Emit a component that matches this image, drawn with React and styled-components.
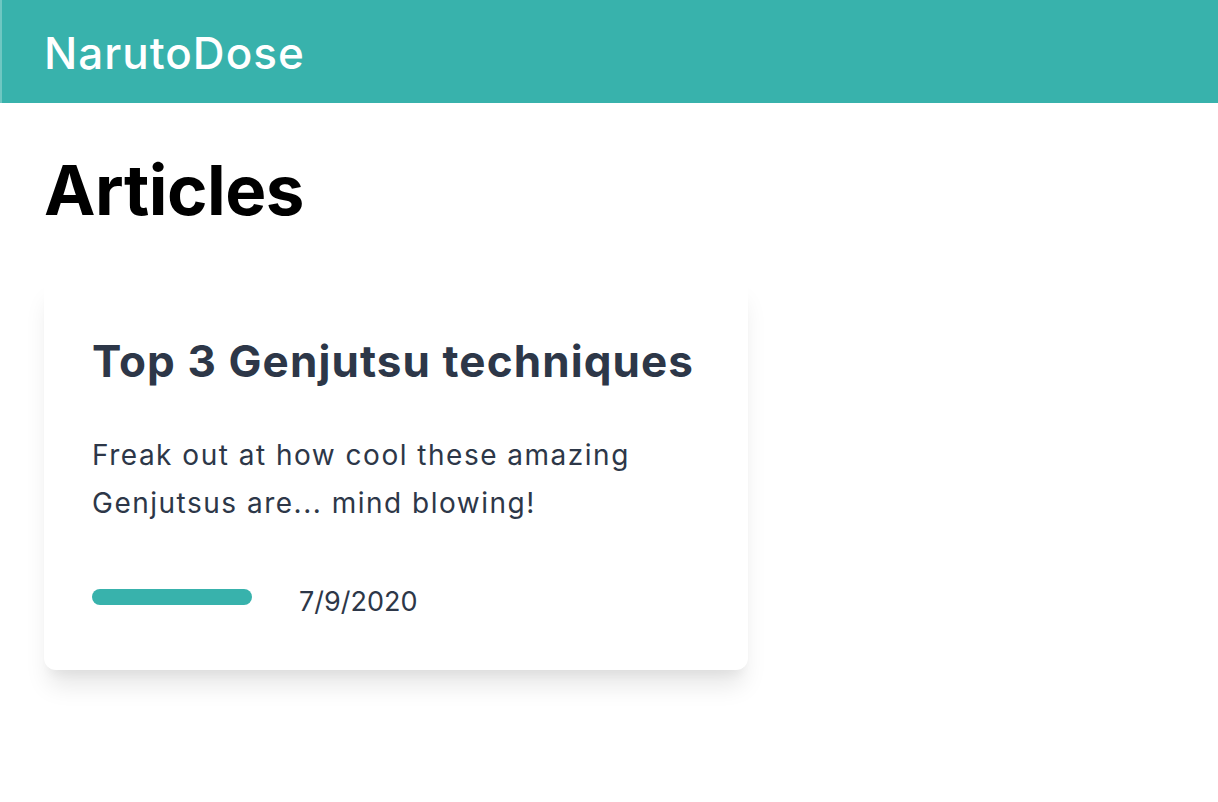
import styled, { createGlobalStyle } from 'styled-components';

const GlobalStyle = createGlobalStyle`
  * { box-sizing: border-box; }
  body {
    margin: 0;
    background: #fff;
    font-family: Inter, "Noto Sans", sans-serif;
  }
`;

const Header = styled.header`
  height: 103px;
  background: #38b2ac;
  border-left: 2px solid #6fc7c2;
  display: flex;
  align-items: center;
  padding: 2px 0 0 42px;
`;

const Brand = styled.h1`
  margin: 0;
  color: #fff;
  font-size: 44px;
  font-weight: 500;
  letter-spacing: 1px;
`;

const Main = styled.main`
  padding: 46px 44px;
`;

const Heading = styled.h2`
  margin: 0 0 45px;
  font-size: 69px;
  font-weight: 700;
  line-height: 1.2;
  color: #000;
  letter-spacing: -0.5px;
`;

const Card = styled.article`
  width: 704px;
  padding: 48px 48px 50px;
  background: #fff;
  border-radius: 12px;
  box-shadow: 0 20px 25px -5px rgba(0, 0, 0, 0.1), 0 10px 10px -5px rgba(0, 0, 0, 0.04);
  color: #2d3748;
`;

const Title = styled.h3`
  margin: 0 0 34px;
  font-size: 44px;
  font-weight: 700;
  line-height: 72px;
  letter-spacing: 1.1px;
`;

const Excerpt = styled.p`
  margin: 0 0 48px;
  font-size: 28px;
  line-height: 48px;
  font-weight: 400;
  letter-spacing: 1.5px;
`;

const Meta = styled.div`
  display: flex;
  align-items: center;
  gap: 47px;
`;

const Bar = styled.span`
  display: block;
  width: 160px;
  height: 16px;
  border-radius: 999px;
  background: #38b2ac;
`;

const Date = styled.time`
  padding-top: 9px;
  font-size: 27px;
  line-height: 36px;
`;

export default function App() {
  return (
    <>
      <GlobalStyle />
      <Header>
        <Brand>NarutoDose</Brand>
      </Header>
      <Main>
        <Heading>Articles</Heading>
        <Card>
          <Title>Top 3 Genjutsu techniques</Title>
          <Excerpt>
            Freak out at how cool these amazing Genjutsus are... mind blowing!
          </Excerpt>
          <Meta>
            <Bar />
            <Date>7/9/2020</Date>
          </Meta>
        </Card>
      </Main>
    </>
  );
}
